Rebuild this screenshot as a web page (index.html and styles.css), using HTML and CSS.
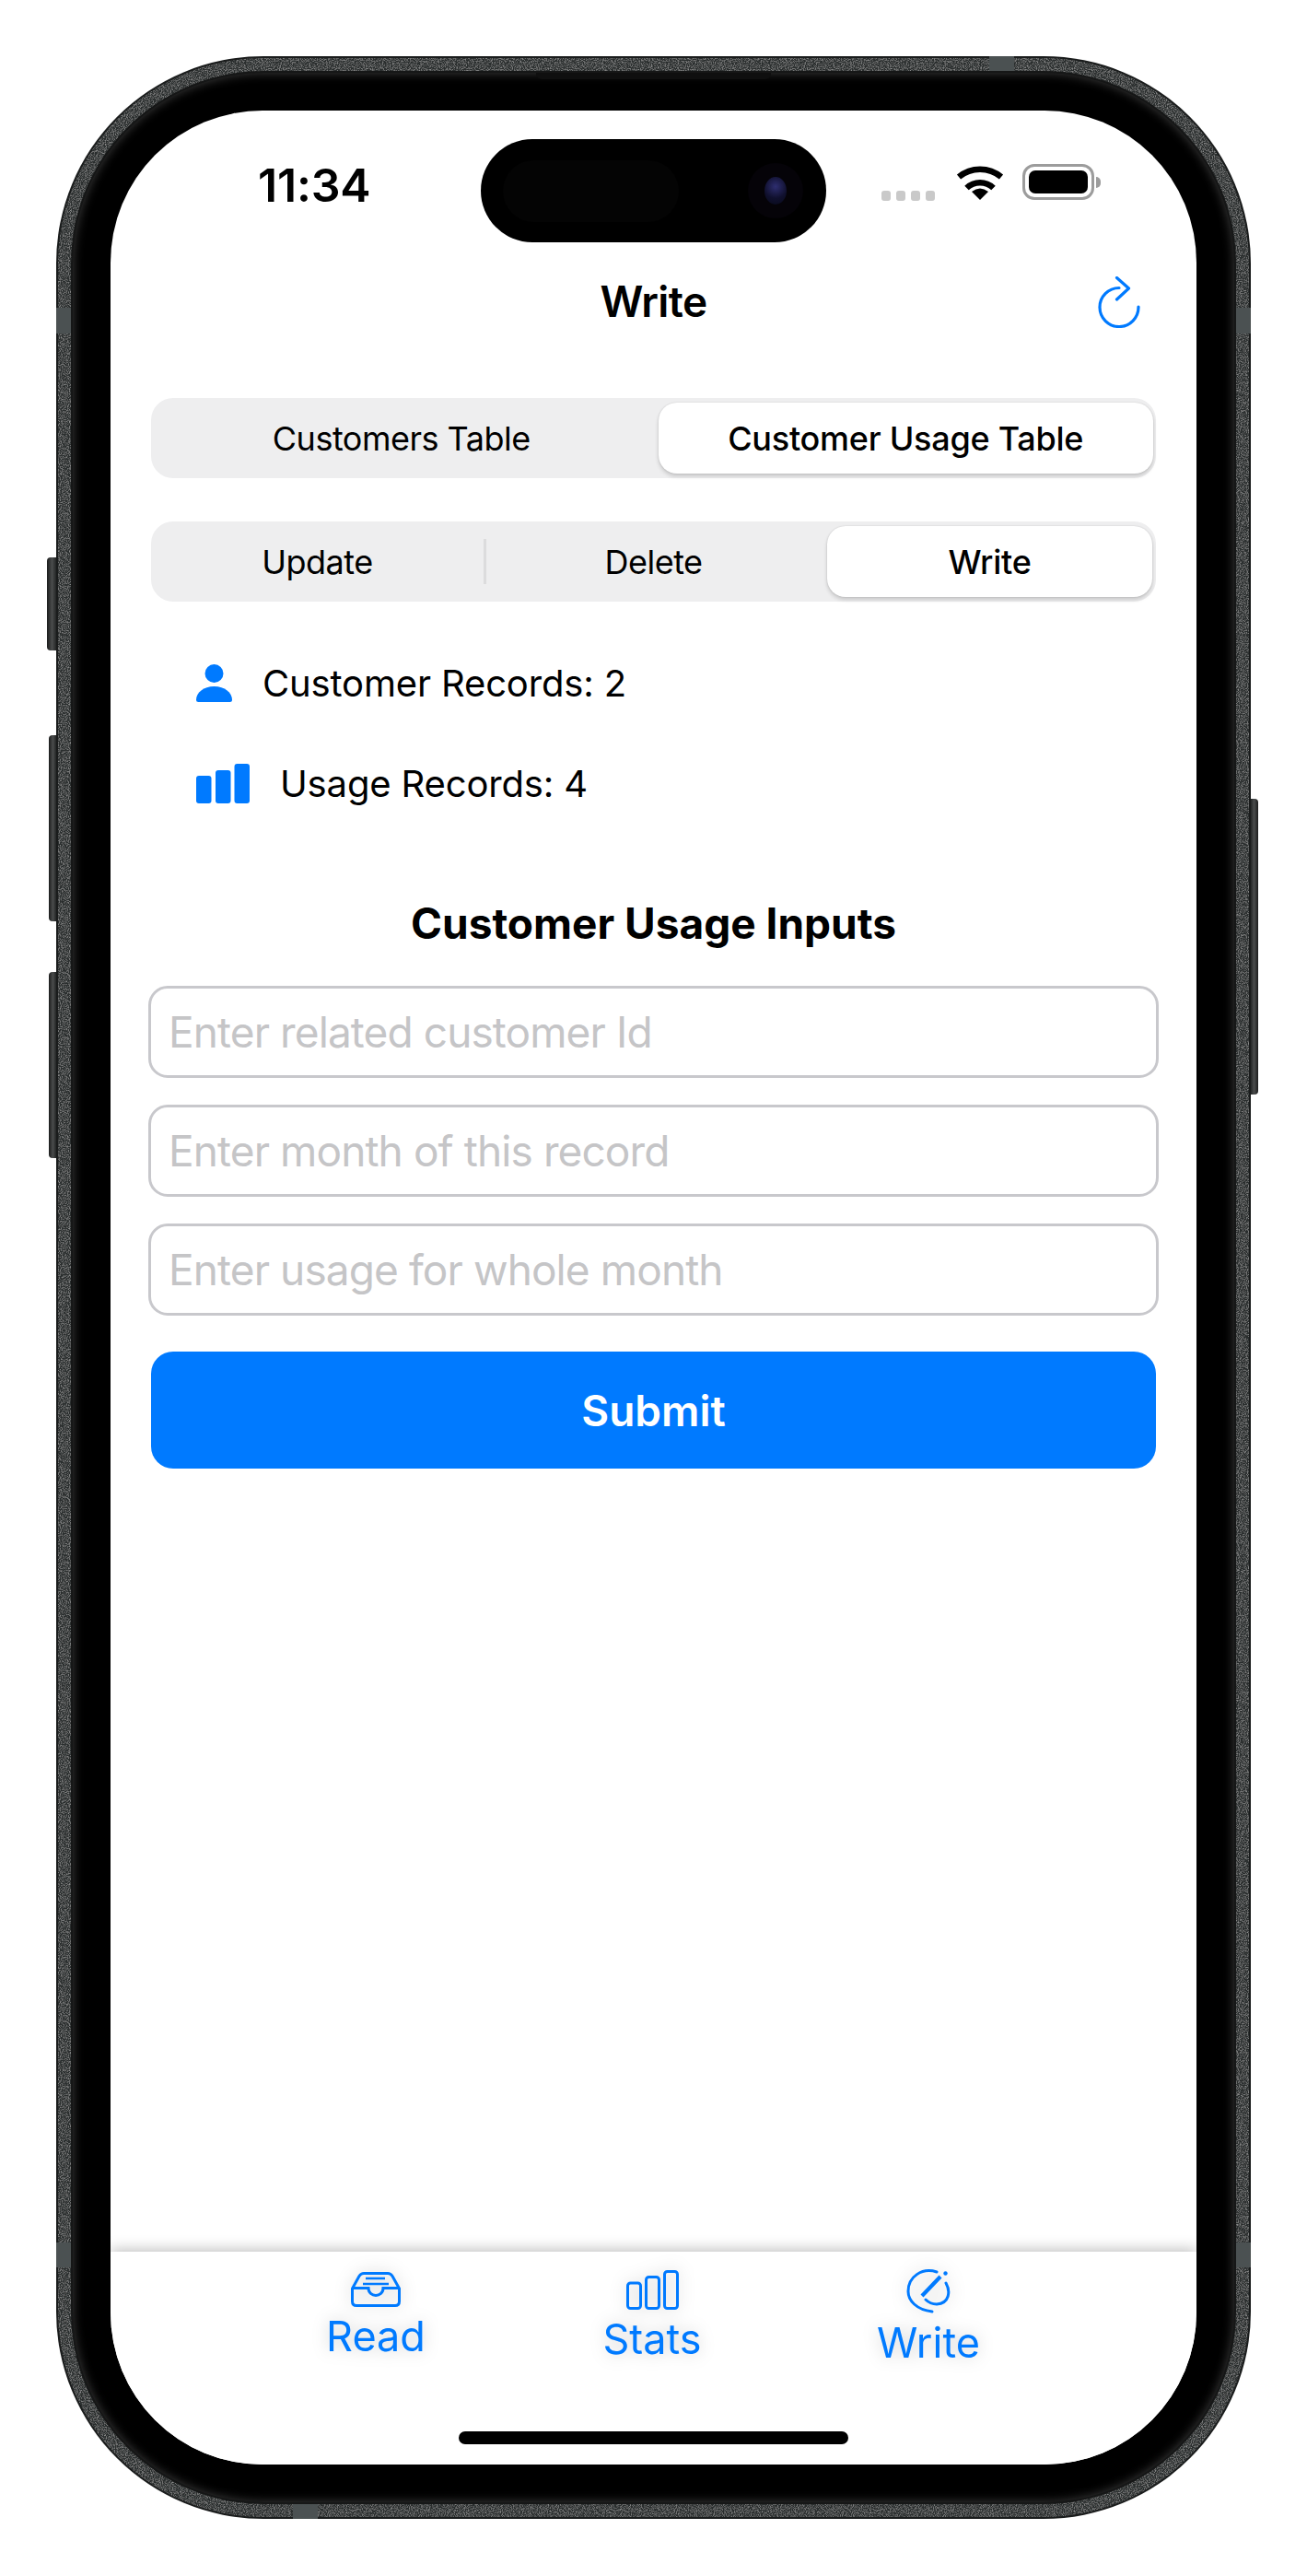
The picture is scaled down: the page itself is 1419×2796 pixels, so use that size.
FILE: index.html
```html
<!DOCTYPE html>
<html lang="en">
<head>
  <meta charset="UTF-8">
  <meta name="viewport" content="width=device-width, initial-scale=1.0">
  <title>Write</title>
  <link rel="stylesheet" href="styles.css">
</head>
<body>
  <div class="phone">
    <!-- metal rim with grain -->
    <svg class="rim" width="1297" height="2673">
      <defs>
        <filter id="grain" x="0" y="0" width="100%" height="100%">
          <feTurbulence type="fractalNoise" baseFrequency="0.9" numOctaves="2" seed="4" result="noise"/>
          <feColorMatrix in="noise" type="matrix" values="0 0 0 0 1  0 0 0 0 1  0 0 0 0 1  0.6 0 0 0 -0.26" result="specks"/>
          <feComposite in="specks" in2="SourceGraphic" operator="in" result="clipped"/>
          <feMerge>
            <feMergeNode in="SourceGraphic"/>
            <feMergeNode in="clipped"/>
          </feMerge>
        </filter>
      </defs>
      <rect x="2" y="2" width="1293" height="2669" rx="223" fill="#2a2d2d" filter="url(#grain)"/>
    </svg>

    <span class="side-btn action"></span>
    <span class="side-btn vol-up"></span>
    <span class="side-btn vol-down"></span>
    <span class="side-btn power"></span>

    <span class="band band-left-top"></span>
    <span class="band band-right-top"></span>
    <span class="band band-left-bottom"></span>
    <span class="band band-right-bottom"></span>
    <span class="band band-top"></span>
    <span class="band band-bottom"></span>

    <div class="bezel">
      <span class="speaker"></span>
      <div class="screen">
        <div class="status">
          <div class="status-left"><span class="time">11:34</span></div>
          <div class="island">
            <span class="island-sensor"></span>
            <span class="camera"><span class="lens"></span></span>
          </div>
          <div class="status-right">
            <div class="signal"><i></i><i></i><i></i><i></i></div>
            <svg class="wifi" width="52" height="38" viewBox="0 0 52 38">
              <path d="M3 13 A36 36 0 0 1 49 13" fill="none" stroke="#000" stroke-width="6.5"/>
              <path d="M11.5 25 A21 21 0 0 1 40.5 25" fill="none" stroke="#000" stroke-width="6.5"/>
              <path d="M26 38 L17 29 Q26 22 35 29 Z" fill="#000"/>
            </svg>
            <div class="battery"><span class="battery-level"></span></div>
            <span class="battery-cap"></span>
          </div>
        </div>

        <div class="nav">
          <span></span>
          <h1 class="nav-title">Write</h1>
          <svg class="refresh" width="46" height="56" viewBox="0 0 46 56">
            <path d="M44 33 A21 21 0 1 1 23 12.5" fill="none" stroke="#007aff" stroke-width="3.2" stroke-linecap="round"/>
            <path d="M20.5 1.5 L33.5 13 L20.5 25" fill="none" stroke="#007aff" stroke-width="3.2" stroke-linecap="round" stroke-linejoin="round"/>
          </svg>
        </div>

        <div class="content">
          <div class="segment segment-two">
            <span class="seg-item">Customers Table</span>
            <span class="seg-item active">Customer Usage Table</span>
          </div>
          <div class="segment segment-three">
            <span class="seg-item divided">Update</span>
            <span class="seg-item">Delete</span>
            <span class="seg-item active">Write</span>
          </div>

          <div class="stats">
            <div class="stat">
              <svg width="39" height="41" viewBox="0 0 39 41">
                <circle cx="19.5" cy="10" r="10" fill="#007aff"/>
                <path d="M2.5 41 H36.5 Q39 41 39 38.5 C39 31 31 24 19.5 24 S0 31 0 38.5 Q0 41 2.5 41 Z" fill="#007aff"/>
              </svg>
              <span>Customer Records: 2</span>
            </div>
            <div class="stat">
              <svg width="58" height="43" viewBox="0 0 58 43">
                <rect x="0" y="13" width="16.5" height="30" rx="3" fill="#007aff"/>
                <rect x="21" y="7" width="16.5" height="36" rx="3" fill="#007aff"/>
                <rect x="41.5" y="0" width="16.5" height="43" rx="3" fill="#007aff"/>
              </svg>
              <span>Usage Records: 4</span>
            </div>
          </div>

          <h2 class="form-title">Customer Usage Inputs</h2>
          <form class="form">
            <input class="field" type="text" placeholder="Enter related customer Id">
            <input class="field" type="text" placeholder="Enter month of this record">
            <input class="field" type="text" placeholder="Enter usage for whole month">
            <button class="submit" type="button">Submit</button>
          </form>
        </div>

        <div class="tabbar">
          <div class="tabs">
            <div class="tab tab-read">
              <svg width="54" height="38" viewBox="0 0 54 38" fill="none" stroke="#007aff" stroke-width="3">
                <path d="M1.5 18 L9 4.5 Q11 1.5 14 1.5 H40 Q43 1.5 45 4.5 L52.5 18 V32 Q52.5 36.5 48 36.5 H6 Q1.5 36.5 1.5 32 Z" stroke-linejoin="round"/>
                <path d="M1.5 17.5 H19 C19 28 35 28 35 17.5 H52.5"/>
                <path d="M16 7 H37 M13 13 H41" stroke-width="2.4"/>
              </svg>
              <span>Read</span>
            </div>
            <div class="tab tab-stats">
              <svg width="57" height="43" viewBox="0 0 57 43" fill="none" stroke="#007aff" stroke-width="3">
                <rect x="1.5" y="14" width="14" height="27.5" rx="3"/>
                <rect x="21.5" y="7.5" width="14" height="34" rx="3"/>
                <rect x="41.5" y="1.5" width="14" height="40" rx="3"/>
              </svg>
              <span>Stats</span>
            </div>
            <div class="tab tab-write">
              <svg width="48" height="48" viewBox="0 0 48 48" fill="none" stroke="#007aff" stroke-width="3" stroke-linecap="round">
                <path d="M33 3 C17 -2 2 8 2 24 C2 34 11 44 28 46"/>
                <path d="M43 15 C48 24 47 37 33 38 C28 38 24 36 21 33"/>
                <path d="M17 29 L37 8" stroke-width="4.2" stroke-linecap="butt"/>
                <circle cx="42.5" cy="4.5" r="2.2" fill="#007aff" stroke="none"/>
              </svg>
              <span>Write</span>
            </div>
          </div>
          <span class="home-indicator"></span>
        </div>
      </div>
    </div>
  </div>
</body>
</html>
```

FILE: styles.css
```css
* {
  box-sizing: border-box;
}

html, body {
  margin: 0;
  background: #fff;
}

body {
  padding: 61px;
  font-family: Inter, "Liberation Sans", sans-serif;
  color: #000;
  overflow: hidden;
}

/* phone shell */
.phone {
  position: relative;
  width: 1297px;
  height: 2673px;
  padding: 18px;
  background: #1a1c1c;
  border-radius: 225px;
}

.rim {
  position: absolute;
  top: 0;
  left: 0;
}

.side-btn {
  position: absolute;
  background: linear-gradient(90deg, #1b1c1c, #4a4c4c 55%, #242626);
  border-radius: 4px 0 0 4px;
}

.action {
  left: -10px;
  top: 544px;
  width: 10px;
  height: 101px;
}

.vol-up {
  left: -8px;
  top: 737px;
  width: 8px;
  height: 202px;
}

.vol-down {
  left: -8px;
  top: 994px;
  width: 8px;
  height: 202px;
}

.power {
  right: -8px;
  top: 806px;
  width: 8px;
  height: 321px;
  border-radius: 0 4px 4px 0;
  background: linear-gradient(270deg, #1b1c1c, #4a4c4c 55%, #242626);
}

.band {
  position: absolute;
  background: #4b5152;
}

.band-left-top, .band-right-top {
  top: 273px;
  width: 18px;
  height: 28px;
}

.band-left-bottom, .band-right-bottom {
  top: 2373px;
  width: 18px;
  height: 27px;
}

.band-left-top, .band-left-bottom {
  left: 0;
}

.band-right-top, .band-right-bottom {
  right: 0;
}

.band-top {
  top: 0;
  left: 1013px;
  width: 27px;
  height: 18px;
}

.band-bottom {
  bottom: 0;
  left: 257px;
  width: 27px;
  height: 18px;
}

.bezel {
  position: relative;
  height: 100%;
  padding: 41px;
  background: #000;
  border-radius: 207px;
  box-shadow: 0 0 0 2px #161717, inset 0 0 12px rgba(90, 90, 90, 0.7);
}

.speaker {
  position: absolute;
  top: 0;
  left: 503px;
  width: 255px;
  height: 7px;
  background: #0f0f0f;
  border-radius: 0 0 6px 6px;
}

.screen {
  position: relative;
  height: 100%;
  display: flex;
  flex-direction: column;
  background: #fff;
  border-radius: 165px;
  overflow: hidden;
}

/* status bar */
.status {
  display: flex;
  height: 143px;
  padding-top: 31px;
}

.status-left {
  width: 402px;
  padding: 21px 0 0 160px;
}

.time {
  display: block;
  font-size: 50px;
  font-weight: 600;
  line-height: 58px;
  letter-spacing: -0.2px;
}

.island {
  display: flex;
  align-items: center;
  justify-content: space-between;
  width: 375px;
  height: 112px;
  padding: 0 25px 0 24px;
  background: #000;
  border-radius: 56px;
}

.island-sensor {
  width: 191px;
  height: 67px;
  background: #040404;
  border-radius: 34px;
}

.camera {
  display: flex;
  align-items: center;
  justify-content: center;
  width: 60px;
  height: 60px;
  background: #050308;
  border-radius: 50%;
}

.lens {
  width: 24px;
  height: 30px;
  background: radial-gradient(circle at 50% 35%, #2e2e70, #10102e 55%, #070a1a);
  border-radius: 50%;
}

.status-right {
  display: flex;
  align-items: flex-start;
  padding: 28px 0 0 60px;
}

.signal {
  display: flex;
  gap: 6px;
  margin-top: 28px;
}

.signal i {
  width: 10px;
  height: 11px;
  background: #c9c9c9;
  border-radius: 3px;
}

.wifi {
  margin-left: 23px;
}

.battery {
  width: 78px;
  height: 39px;
  margin: -1px 0 0 20px;
  padding: 4px;
  border: 3px solid #9c9c9c;
  border-radius: 13px;
}

.battery-level {
  display: block;
  height: 100%;
  background: #000;
  border-radius: 7px;
}

.battery-cap {
  width: 5px;
  height: 12px;
  margin: 13px 0 0 2px;
  background: #9c9c9c;
  border-radius: 0 5px 5px 0;
}

/* nav */
.nav {
  display: grid;
  grid-template-columns: 1fr auto 1fr;
  align-items: center;
  height: 128px;
  padding: 0 61px;
}

.nav-title {
  margin: 0;
  font-size: 46px;
  font-weight: 600;
  letter-spacing: -0.6px;
}

.refresh {
  justify-self: end;
  margin-top: 1px;
}

/* content */
.content {
  flex: 1;
  padding: 41px 44px 0;
}

.segment {
  display: grid;
  height: 87px;
  background: #eeeeef;
  border-radius: 24px;
}

.segment-two {
  grid-template-columns: 1fr 1fr;
  gap: 10px;
  padding: 5px 3px;
}

.segment-three {
  grid-template-columns: repeat(3, 1fr);
  gap: 12px;
  padding: 5px 4px;
  margin-top: 47px;
}

.seg-item {
  position: relative;
  display: flex;
  align-items: center;
  justify-content: center;
  font-size: 36px;
  font-weight: 400;
  letter-spacing: -0.5px;
  border-radius: 20px;
}

.seg-item.active {
  font-weight: 500;
  letter-spacing: -0.25px;
  background: #fff;
  box-shadow: 0 3px 4px rgba(0, 0, 0, 0.16), 0 0 2px rgba(0, 0, 0, 0.14);
}

.seg-item.divided::after {
  content: "";
  position: absolute;
  right: -7px;
  top: 14px;
  width: 3px;
  height: 49px;
  background: #dcdcdd;
}

.stats {
  margin-top: 34px;
  padding-left: 49px;
}

.stat {
  display: flex;
  align-items: center;
  gap: 33px;
  height: 109px;
  font-size: 40px;
  letter-spacing: -0.15px;
}

.form-title {
  height: 60px;
  margin: 67px 0 38px;
  font-size: 46px;
  font-weight: 700;
  line-height: 60px;
  text-align: center;
}

.form {
  display: flex;
  flex-direction: column;
  gap: 29px;
}

.field {
  display: block;
  height: 100px;
  margin: 0 -3px;
  padding: 0 19px;
  background: #fff;
  border: 3.5px solid #c8c8cc;
  border-radius: 21px;
  font-family: inherit;
  font-size: 46px;
  letter-spacing: -0.9px;
  color: #000;
  outline: none;
}

.field::placeholder {
  color: #c5c5c7;
  opacity: 1;
}

.submit {
  height: 127px;
  margin-top: 10px;
  background: #007aff;
  border: 0;
  border-radius: 24px;
  font-family: inherit;
  font-size: 46px;
  font-weight: 600;
  color: #fff;
}

/* tab bar */
.tabbar {
  display: flex;
  flex-direction: column;
  height: 231px;
  background: #fff;
  box-shadow: 0 -3px 14px rgba(0, 0, 0, 0.24);
}

.tabs {
  display: grid;
  grid-template-columns: repeat(3, 300px);
  padding-left: 138px;
}

.tab {
  display: flex;
  flex-direction: column;
  align-items: center;
  font-size: 45px;
  line-height: 56px;
  color: #007aff;
  filter: drop-shadow(0 0 9px rgba(0, 0, 0, 0.2));
}

.tab svg {
  margin-bottom: 4px;
}

.tab-read {
  padding-top: 22px;
}

.tab-stats {
  padding-top: 20px;
}

.tab-write {
  padding-top: 19px;
}

.home-indicator {
  align-self: center;
  width: 423px;
  height: 14px;
  margin-top: auto;
  margin-bottom: 22px;
  background: #000;
  border-radius: 7px;
}
```
